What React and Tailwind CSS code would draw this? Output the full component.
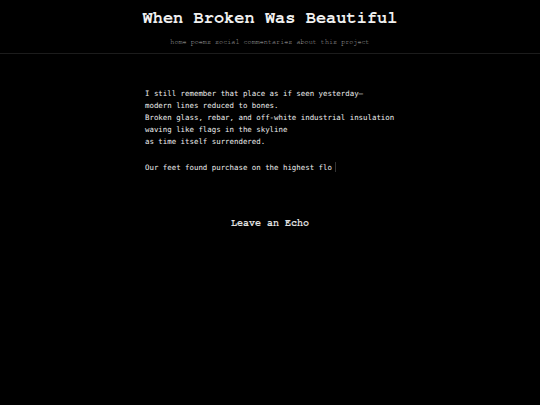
const courier = '"Nimbus Mono PS", "Nimbus Mono L", FreeMono, "Courier New", "Liberation Mono", monospace';

export default function App() {
  return (
    <div className="min-h-[405px] bg-black text-white">
      <header className="border-b border-[#1c1c1c] pt-[9px] pb-[7px] text-center">
        <h1 className="text-[17px] leading-[18px] font-bold text-[#f0f0f0]" style={{ fontFamily: courier }}>
          When Broken Was Beautiful
        </h1>
        <nav className="mt-[11px] flex justify-center gap-[4px] text-[6.8px] leading-[8px] text-[#b0b0b0]" style={{ fontFamily: courier }}>
          <span>home</span><span>poems</span><span>social</span><span>commentaries</span><span>about</span><span>this</span><span>project</span>
        </nav>
      </header>
      <main className="mx-auto w-[250px] pt-[34px]">
        <div className="whitespace-pre text-[7.4px] leading-[12px] text-[#ececec]" style={{ fontFamily: '"DejaVu Sans Mono", monospace' }}>
          {"I still remember that place as if seen yesterday\u2014\nmodern lines reduced to bones.\nBroken glass, rebar, and off-white industrial insulation\nwaving like flags in the skyline\nas time itself surrendered.\n\nOur feet found purchase on the highest flo"}
          <span className="ml-[3px] inline-block h-[10px] w-px translate-y-[2px] bg-[#333]"></span>
        </div>
      </main>
      <section className="mt-[43px] text-center">
        <h2 className="text-[10px] leading-[12px] font-bold text-[#e0e0e0]" style={{ fontFamily: courier }}>
          Leave an Echo
        </h2>
      </section>
    </div>
  );
}
